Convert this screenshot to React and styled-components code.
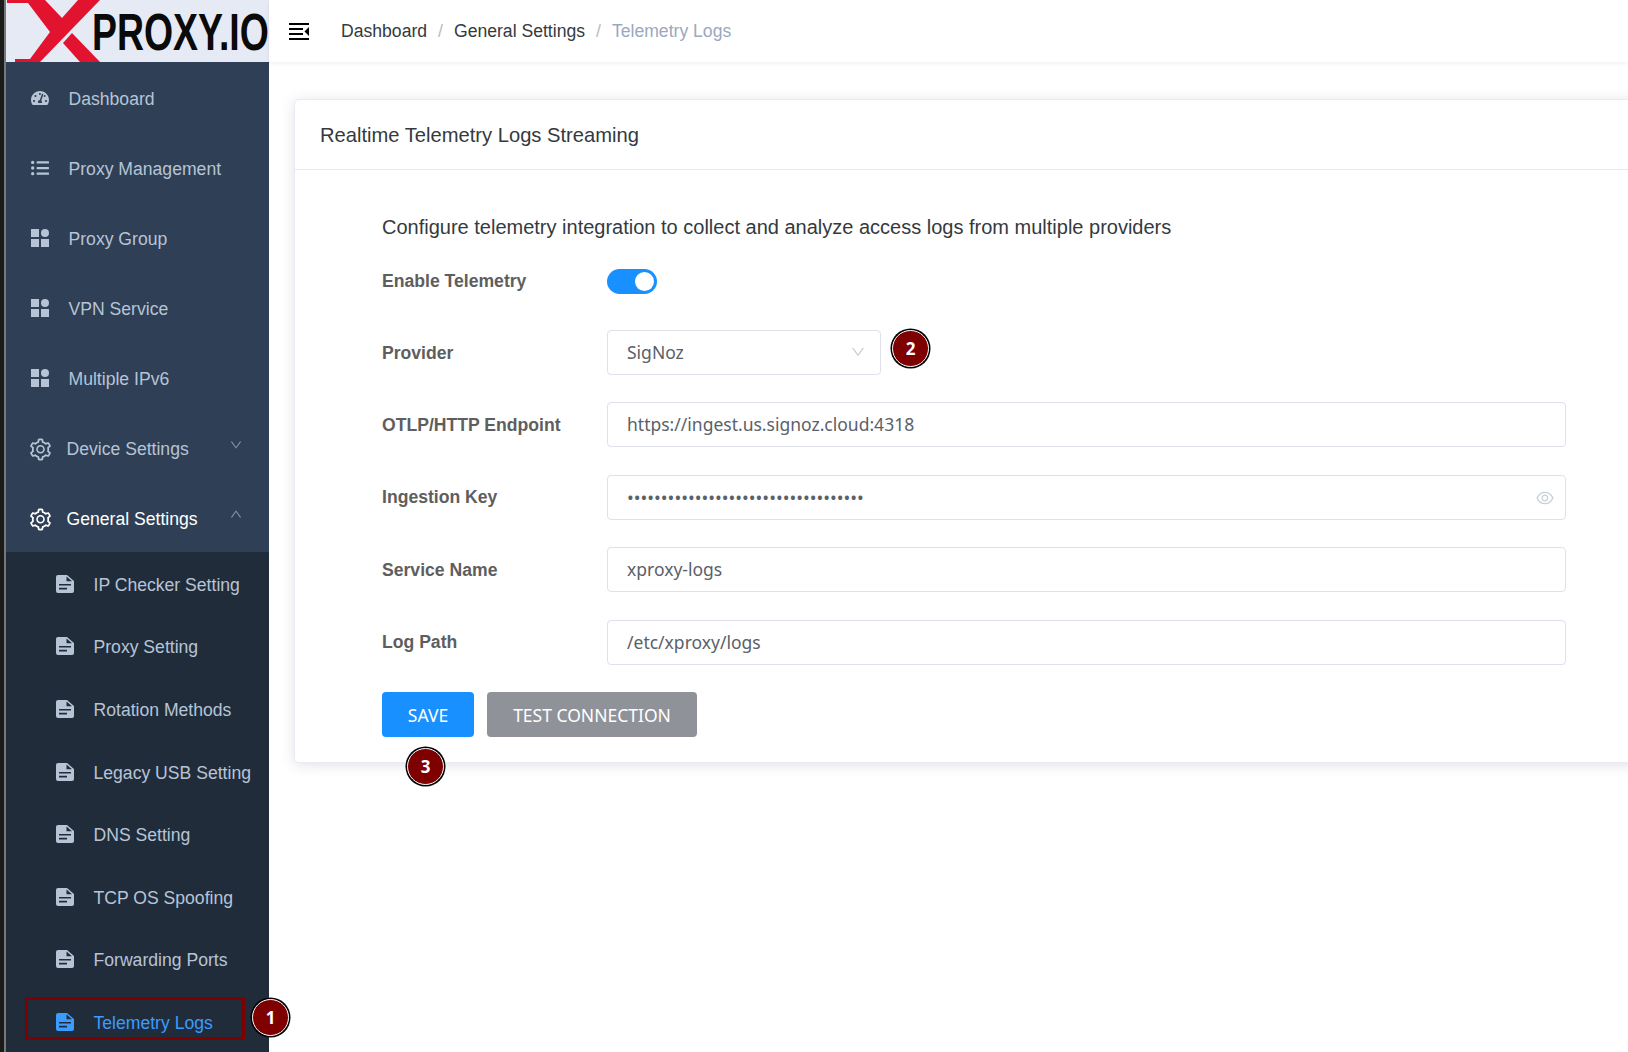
import React from "react";
import styled, { createGlobalStyle } from "styled-components";
import { AiOutlineSetting, AiOutlineEye, AiOutlineDown, AiOutlineUp } from "react-icons/ai";
import { FaListUl, FaTachometerAlt } from "react-icons/fa";

const Global = createGlobalStyle`
  html, body { margin: 0; padding: 0; background: #fff; overflow: hidden; }
  body { font-family: "Liberation Sans", Arial, sans-serif; }
  * { box-sizing: border-box; }
`;
const Page = styled.div`display:flex;width:1628px;height:1052px;overflow:hidden;background:#fff;`;
const Edge = styled.div`width:6px;flex:none;background:#1b1b1b;border-right:2px solid #777;`;
const Side = styled.aside`width:263px;flex:none;display:flex;flex-direction:column;background:#2f3f55;`;
const Logo = styled.svg`display:block;width:263px;height:62px;flex:none;background:#e6eaf5;`;
const Nav = styled.nav`display:flex;flex-direction:column;`;
const NavRow = styled.div`height:70px;display:flex;align-items:center;padding:5px 0 0 24px;color:${p=>p.$on?"#fff":"#b6c4d6"};font-size:17.6px;position:relative;`;
const IconBox = styled.span`width:${p=>p.$w||20}px;height:20px;display:flex;align-items:center;justify-content:center;flex:none;margin-right:${p=>p.$gap||18.5}px;margin-bottom:${p=>p.$up||0}px;font-size:${p=>p.$size||18}px;& > svg{flex:none;}`;
const Chev = styled.span`position:absolute;left:223px;top:${p=>p.$t}px;font-size:14px;color:#8292a6;display:flex;`;
const Sub = styled.div`background:#212c3b;display:flex;flex-direction:column;flex:1;padding-top:2px;`;
const SubRow = styled.div`height:62.6px;display:flex;align-items:center;padding-left:50px;font-size:17.6px;color:${p=>p.$on?"#3b9bff":"#b6c4d6"};position:relative;`;
const Highlight = styled.div`position:absolute;left:19px;top:5px;width:220px;height:43px;border:3px solid #7f0000;`;
const Badge = styled.span`position:absolute;width:37px;height:37px;border-radius:50%;background:#7f0000;color:#fff;font:700 17px "Noto Sans",sans-serif;display:flex;align-items:center;justify-content:center;border:1.5px solid #fff;box-shadow:0 0 0 1.5px #000;z-index:3;`;
const Main = styled.main`flex:1;min-width:0;display:flex;flex-direction:column;`;
const Top = styled.header`height:62px;flex:none;display:flex;align-items:center;padding-left:20px;background:#fff;box-shadow:0 1px 4px rgba(0,21,41,.08);color:#000;`;
const Crumbs = styled.div`display:flex;align-items:center;margin-left:32px;font-size:17.6px;color:#343a40;`;
const Sep = styled.span`color:#b4bcc6;margin:0 11px;`;
const CrumbLast = styled.span`color:#9aa9bd;`;
const Card = styled.section`margin:37px 0 0 25px;width:1358px;height:664px;background:#fff;border:1px solid #e8ebf3;border-radius:5px;box-shadow:0 2px 14px rgba(40,50,70,.14);flex:none;`;
const CardHead = styled.div`height:70px;display:flex;align-items:center;padding:2px 0 0 25px;border-bottom:1px solid #e6e9f4;font-size:20.16px;color:#343a40;`;
const CardBody = styled.div`padding:45px 85px 0 87px;`;
const Lead = styled.p`margin:0;font-size:20px;color:#343a40;line-height:24px;`;
const Row = styled.div`display:flex;align-items:center;min-height:45px;margin-top:${p=>p.$mt??27.5}px;`;
const Label = styled.label`width:225px;flex:none;font-size:17.6px;font-weight:700;color:#5e5e5e;padding-top:1px;`;
const Field = styled.div`height:45px;width:${p=>p.$w||1185}px;border:1px solid #dfe1ea;border-radius:4px;display:flex;align-items:center;padding:0 19px 1px;font:17.5px "Noto Sans",sans-serif;color:#5a6169;position:relative;`;
const Toggle = styled.span`width:50px;height:25px;border-radius:13px;background:#1890ff;position:relative;display:block;margin-top:2px;`;
const Knob = styled.span`position:absolute;right:3px;top:3px;width:19px;height:19px;border-radius:50%;background:#fff;`;
const FieldIcon = styled.span`position:absolute;display:flex;color:#c6d0da;right:${p=>p.$r}px;top:${p=>p.$t}px;font-size:${p=>p.$s}px;`;
const Actions = styled.div`display:flex;gap:13px;margin-top:27.5px;position:relative;`;
const Btn = styled.button`height:45px;width:${p=>p.$w}px;border:0;border-radius:4px;background:${p=>p.$c};color:#fff;font:17.5px "Noto Sans",sans-serif;padding:0;`;
const Dots = styled.span`font-size:18px;`;

const Grid = () => (
  <svg width="18" height="18" viewBox="0 0 18 18" fill="currentColor"><rect width="8" height="8"/><circle cx="14" cy="4" r="4"/><rect y="10" width="8" height="8"/><rect x="10" y="10" width="8" height="8"/></svg>
);
const Doc = () => (
  <svg width="18" height="18" viewBox="0 0 18 18" fill="currentColor" fillRule="evenodd">
    <path d="M2 0H11L18 6V16A2 2 0 0 1 16 18H2A2 2 0 0 1 0 16V2A2 2 0 0 1 2 0ZM3 9V10.6H15V9ZM3 12.8V14.4H11V12.8ZM10.5 1.6V6.2H16Z"/>
  </svg>
);
const MenuFold = () => (
  <svg width="20" height="17" viewBox="0 0 20 17" fill="currentColor">
    <rect width="20" height="2"/><rect y="5" width="14" height="2"/><rect y="10" width="14" height="2"/><rect y="15" width="20" height="2"/>
    <path d="M20 4L15.5 8.5L20 13Z"/>
  </svg>
);
const main = [
  ["Dashboard", <FaTachometerAlt/>, 18],
  ["Proxy Management", <FaListUl/>, 18],
  ["Proxy Group", <Grid/>],
  ["VPN Service", <Grid/>],
  ["Multiple IPv6", <Grid/>],
];
const subs = ["IP Checker Setting","Proxy Setting","Rotation Methods","Legacy USB Setting","DNS Setting","TCP OS Spoofing","Forwarding Ports"];

export default function App(){
  return (
    <Page>
      <Global/>
      <Edge/>
      <Side>
        <Logo viewBox="0 0 263 62">
          <polygon fill="#e2132f" points="1,0 39,0 56,18 72,0 94,0 34,62 9,62 9,59 24,59 44,32 22,3 1,3" />
          <polygon fill="#e2132f" points="57,43 66,33 94,62 74,62" />
          <text transform="translate(86 50) scale(0.72 1)" fontFamily="'Liberation Sans',sans-serif" fontWeight="700" fontSize="52" fill="#0a0a0a">PROXY.IO</text>
        </Logo>
        <Nav>
          {main.map(([t,i,s])=>(
            <NavRow key={t}><IconBox $size={s} $up={4}>{i}</IconBox>{t}</NavRow>
          ))}
          <NavRow><IconBox $gap={16.5} $size={25}><AiOutlineSetting/></IconBox>Device Settings<Chev $t={26}><AiOutlineDown/></Chev></NavRow>
          <NavRow $on><IconBox $gap={16.5} $size={25}><AiOutlineSetting/></IconBox>General Settings<Chev $t={25}><AiOutlineUp/></Chev></NavRow>
        </Nav>
        <Sub>
          {subs.map(t=>(
            <SubRow key={t}><IconBox $w={18} $gap={19.5} $up={3}><Doc/></IconBox>{t}</SubRow>
          ))}
          <SubRow $on><Highlight/><IconBox $w={18} $gap={19.5} $up={3}><Doc/></IconBox>Telemetry Logs<Badge style={{left:246,top:7}}>1</Badge></SubRow>
        </Sub>
      </Side>
      <Main>
        <Top>
          <MenuFold/>
          <Crumbs>Dashboard<Sep>/</Sep>General Settings<Sep>/</Sep><CrumbLast>Telemetry Logs</CrumbLast></Crumbs>
        </Top>
        <Card>
          <CardHead>Realtime Telemetry Logs Streaming</CardHead>
          <CardBody>
            <Lead>Configure telemetry integration to collect and analyze access logs from multiple providers</Lead>
            <Row $mt={19}><Label>Enable Telemetry</Label><Toggle><Knob/></Toggle></Row>
            <Row $mt={27}><Label>Provider</Label><Field $w={274}>SigNoz<FieldIcon $r={14} $t={13} $s={16}><AiOutlineDown/></FieldIcon><Badge style={{left:284,top:-1}}>2</Badge></Field></Row>
            <Row $mt={27}><Label>OTLP/HTTP Endpoint</Label><Field>https://ingest.us.signoz.cloud:4318</Field></Row>
            <Row><Label>Ingestion Key</Label><Field><Dots>•••••••••••••••••••••••••••••••••••</Dots><FieldIcon $r={10} $t={12} $s={20}><AiOutlineEye/></FieldIcon></Field></Row>
            <Row><Label>Service Name</Label><Field>xproxy-logs</Field></Row>
            <Row><Label>Log Path</Label><Field>/etc/xproxy/logs</Field></Row>
            <Actions>
              <Btn $w={92} $c="#1890ff">SAVE</Btn>
              <Btn $w={210} $c="#909299">TEST CONNECTION</Btn>
              <Badge style={{left:25,top:56}}>3</Badge>
            </Actions>
          </CardBody>
        </Card>
      </Main>
    </Page>
  );
}
